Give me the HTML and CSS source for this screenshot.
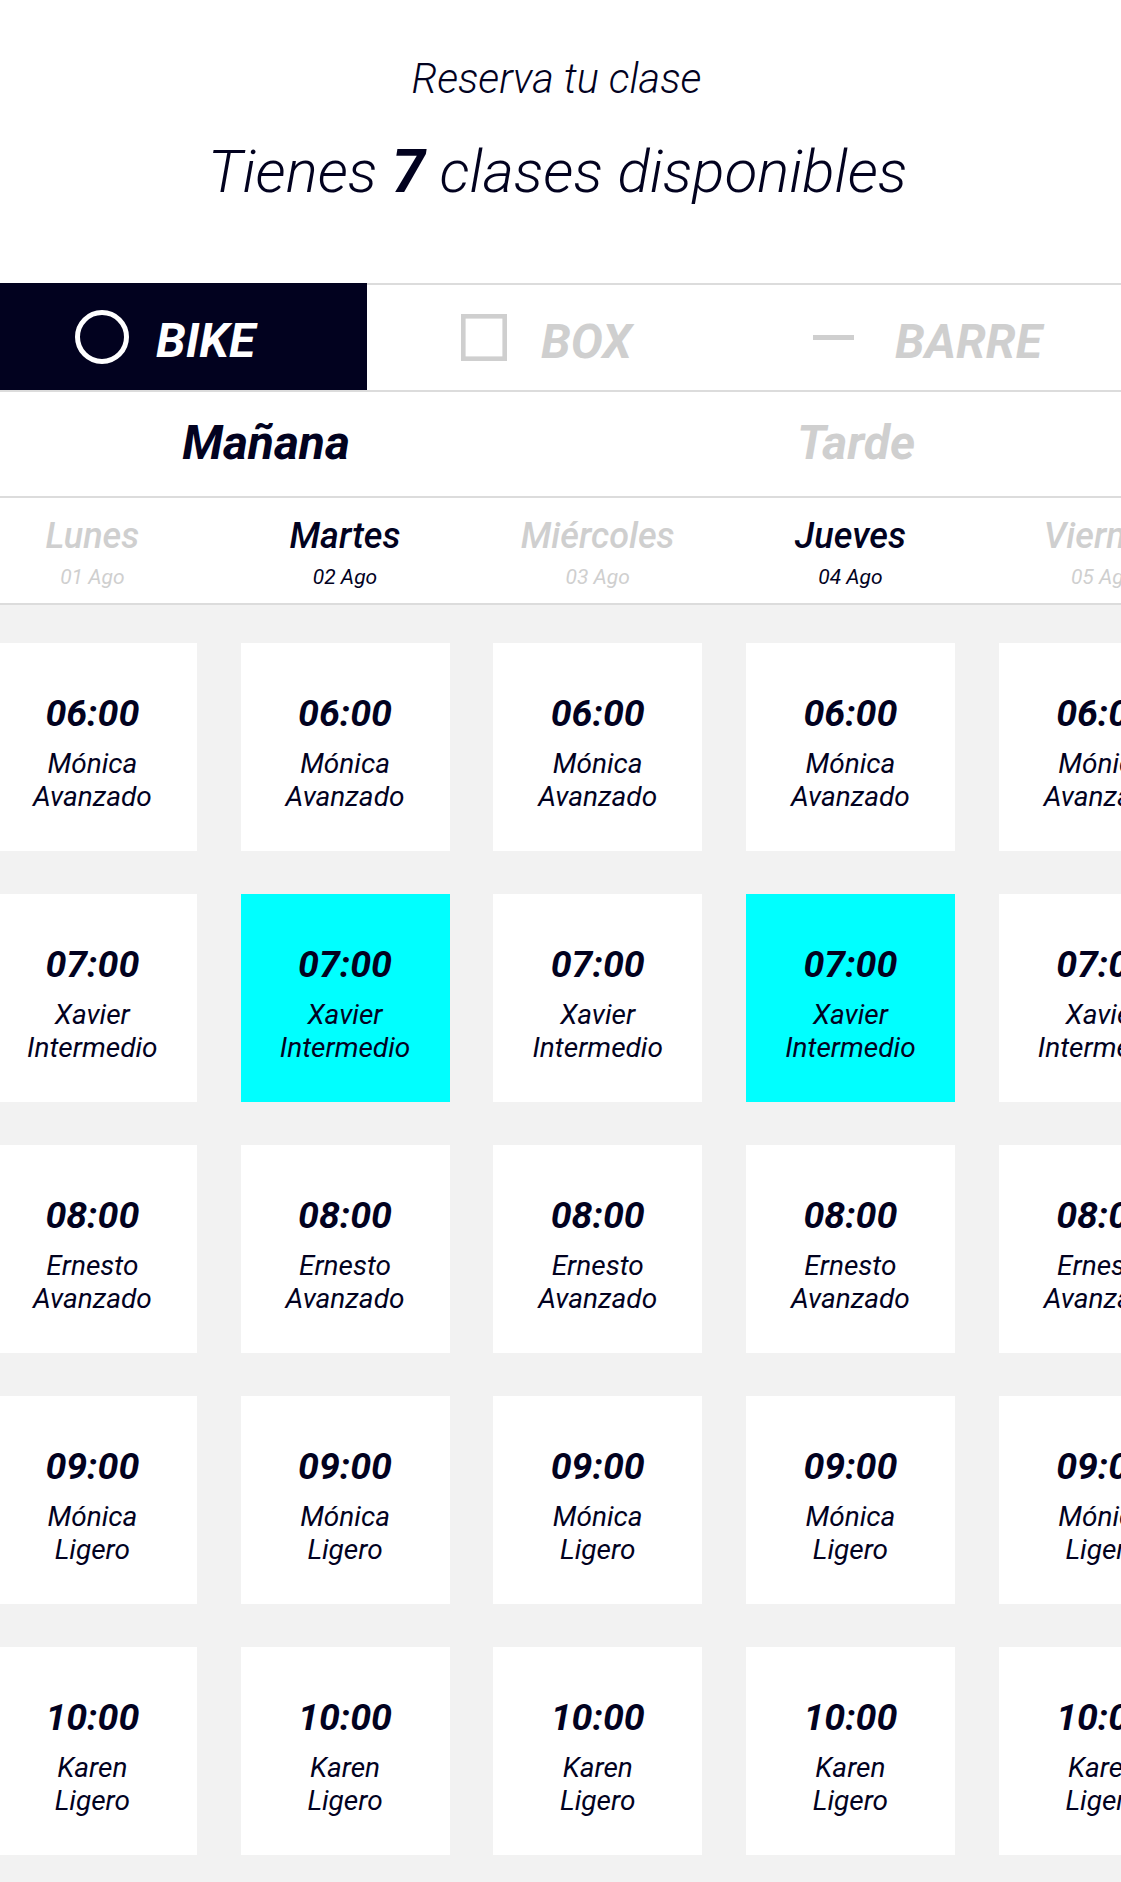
FILE: index.html
```html
<!DOCTYPE html>
<html lang="es">
<head>
<meta charset="utf-8">
<title>Reserva tu clase</title>
<link rel="stylesheet" href="styles.css">
</head>
<body>
<div class="page">
  <header class="hero">
    <p class="hero-sub">Reserva tu clase</p>
    <h1 class="hero-title">Tienes <strong>7</strong> clases disponibles</h1>
  </header>

  <nav class="tabs">
    <div class="tab tab-bike is-active">
      <span class="tab-icon">
        <svg width="54" height="54" viewBox="0 0 54 54"><circle cx="27" cy="27" r="24.5" fill="none" stroke="#fff" stroke-width="5"/></svg>
      </span>
      <span class="tab-label">BIKE</span>
    </div>
    <div class="tab tab-box">
      <span class="tab-icon">
        <svg width="46" height="47" viewBox="0 0 46 47"><rect x="2.3" y="2.3" width="41.4" height="42.4" fill="none" stroke="#cfcfcf" stroke-width="4.6"/></svg>
      </span>
      <span class="tab-label">BOX</span>
    </div>
    <div class="tab tab-barre">
      <span class="tab-icon">
        <svg width="41" height="6" viewBox="0 0 41 6"><rect x="0" y="0" width="41" height="5" fill="#cfcfcf"/></svg>
      </span>
      <span class="tab-label">BARRE</span>
    </div>
  </nav>

  <div class="periods">
    <div class="period is-active">Mañana</div>
    <div class="period">Tarde</div>
  </div>

  <div class="days">
    <div class="day"><span class="day-name">Lunes</span><span class="day-date">01 Ago</span></div>
    <div class="day is-active"><span class="day-name">Martes</span><span class="day-date">02 Ago</span></div>
    <div class="day"><span class="day-name">Miércoles</span><span class="day-date">03 Ago</span></div>
    <div class="day is-active"><span class="day-name">Jueves</span><span class="day-date">04 Ago</span></div>
    <div class="day"><span class="day-name">Viernes</span><span class="day-date">05 Ago</span></div>
  </div>

  <main class="schedule">
    <div class="slots">
      <div class="slot"><span class="slot-time">06:00</span><span class="slot-line">Mónica</span><span class="slot-line">Avanzado</span></div>
      <div class="slot"><span class="slot-time">06:00</span><span class="slot-line">Mónica</span><span class="slot-line">Avanzado</span></div>
      <div class="slot"><span class="slot-time">06:00</span><span class="slot-line">Mónica</span><span class="slot-line">Avanzado</span></div>
      <div class="slot"><span class="slot-time">06:00</span><span class="slot-line">Mónica</span><span class="slot-line">Avanzado</span></div>
      <div class="slot"><span class="slot-time">06:00</span><span class="slot-line">Mónica</span><span class="slot-line">Avanzado</span></div>

      <div class="slot"><span class="slot-time">07:00</span><span class="slot-line">Xavier</span><span class="slot-line">Intermedio</span></div>
      <div class="slot is-booked"><span class="slot-time">07:00</span><span class="slot-line">Xavier</span><span class="slot-line">Intermedio</span></div>
      <div class="slot"><span class="slot-time">07:00</span><span class="slot-line">Xavier</span><span class="slot-line">Intermedio</span></div>
      <div class="slot is-booked"><span class="slot-time">07:00</span><span class="slot-line">Xavier</span><span class="slot-line">Intermedio</span></div>
      <div class="slot"><span class="slot-time">07:00</span><span class="slot-line">Xavier</span><span class="slot-line">Intermedio</span></div>

      <div class="slot"><span class="slot-time">08:00</span><span class="slot-line">Ernesto</span><span class="slot-line">Avanzado</span></div>
      <div class="slot"><span class="slot-time">08:00</span><span class="slot-line">Ernesto</span><span class="slot-line">Avanzado</span></div>
      <div class="slot"><span class="slot-time">08:00</span><span class="slot-line">Ernesto</span><span class="slot-line">Avanzado</span></div>
      <div class="slot"><span class="slot-time">08:00</span><span class="slot-line">Ernesto</span><span class="slot-line">Avanzado</span></div>
      <div class="slot"><span class="slot-time">08:00</span><span class="slot-line">Ernesto</span><span class="slot-line">Avanzado</span></div>

      <div class="slot"><span class="slot-time">09:00</span><span class="slot-line">Mónica</span><span class="slot-line">Ligero</span></div>
      <div class="slot"><span class="slot-time">09:00</span><span class="slot-line">Mónica</span><span class="slot-line">Ligero</span></div>
      <div class="slot"><span class="slot-time">09:00</span><span class="slot-line">Mónica</span><span class="slot-line">Ligero</span></div>
      <div class="slot"><span class="slot-time">09:00</span><span class="slot-line">Mónica</span><span class="slot-line">Ligero</span></div>
      <div class="slot"><span class="slot-time">09:00</span><span class="slot-line">Mónica</span><span class="slot-line">Ligero</span></div>

      <div class="slot"><span class="slot-time">10:00</span><span class="slot-line">Karen</span><span class="slot-line">Ligero</span></div>
      <div class="slot"><span class="slot-time">10:00</span><span class="slot-line">Karen</span><span class="slot-line">Ligero</span></div>
      <div class="slot"><span class="slot-time">10:00</span><span class="slot-line">Karen</span><span class="slot-line">Ligero</span></div>
      <div class="slot"><span class="slot-time">10:00</span><span class="slot-line">Karen</span><span class="slot-line">Ligero</span></div>
      <div class="slot"><span class="slot-time">10:00</span><span class="slot-line">Karen</span><span class="slot-line">Ligero</span></div>
    </div>
  </main>
</div>
</body>
</html>
```

FILE: styles.css
```css
html, body {
  margin: 0;
  padding: 0;
  background: #f2f2f2;
}

body {
  font-family: Roboto, "Noto Sans", sans-serif;
  color: #02021f;
}

.page {
  width: 1121px;
  min-height: 1882px;
  overflow: hidden;
  background: #f2f2f2;
}

/* Hero */
.hero {
  box-sizing: border-box;
  height: 283px;
  padding-top: 55px;
  background: #fff;
  text-align: center;
  font-style: italic;
}

.hero-sub {
  margin: 0;
  padding-right: 8px;
  font-size: 41.5px;
  line-height: 48px;
  font-weight: 300;
}

.hero-title {
  margin: 34px 0 0;
  padding-right: 6px;
  font-size: 60px;
  line-height: 70px;
  font-weight: 300;
}

.hero-title strong {
  font-weight: 700;
}

/* Tabs */
.tabs {
  display: flex;
  height: 105px;
  background: #fff;
  border-top: 2px solid #dcdcdc;
  border-bottom: 2px solid #dcdcdc;
}

.tab {
  box-sizing: border-box;
  display: flex;
  align-items: center;
  gap: 30px;
  font-size: 48px;
  font-weight: 700;
  font-style: italic;
  color: #cfcfcf;
}

.tab-label {
  padding-top: 7px;
}

.tab-icon {
  width: 54px;
  display: flex;
  justify-content: center;
  align-items: center;
}

.tab-icon svg {
  display: block;
}

.tab-bike {
  width: 367px;
  padding-left: 75px;
  gap: 27px;
}

.tab.is-active {
  background: #02021f;
  color: #fff;
  margin-top: -2px;
  height: 107px;
}

.tab-box {
  width: 367px;
  padding-left: 90px;
}

.tab-barre {
  flex: 1;
  padding-left: 72px;
  gap: 35px;
}

/* Periods */
.periods {
  display: flex;
  width: 1180px;
  margin-left: -29px;
  height: 104px;
  background: #fff;
  border-bottom: 2px solid #dcdcdc;
}

.period {
  width: 590px;
  display: flex;
  align-items: center;
  justify-content: center;
  padding-bottom: 3px;
  box-sizing: border-box;
  font-size: 48px;
  font-weight: 700;
  font-style: italic;
  color: #cfcfcf;
}

.period.is-active {
  color: #02021f;
}

/* Days */
.days {
  display: grid;
  grid-template-columns: repeat(5, 252.7px);
  box-sizing: border-box;
  height: 107px;
  padding: 17px 0 15px;
  background: #fff;
  border-bottom: 2px solid #dcdcdc;
  margin-left: -34px;
  width: 1155px;
  overflow: hidden;
}

.day {
  display: flex;
  flex-direction: column;
  align-items: center;
  font-style: italic;
  color: #cfcfcf;
}

.day.is-active {
  color: #02021f;
}

.day-name {
  font-size: 36px;
  line-height: 42px;
  font-weight: 500;
  white-space: nowrap;
}

.day-date {
  margin-top: 8px;
  font-size: 21px;
  line-height: 24px;
  font-weight: 400;
  white-space: nowrap;
}

/* Schedule */
.schedule {
  padding-top: 38px;
  margin-left: -34px;
  width: 1155px;
  overflow: hidden;
}

.slots {
  display: grid;
  grid-template-columns: repeat(5, 252.7px);
  row-gap: 43px;
}

.slot {
  box-sizing: border-box;
  justify-self: center;
  width: 209px;
  height: 208px;
  padding-top: 48px;
  background: #fff;
  display: flex;
  flex-direction: column;
  align-items: center;
  font-style: italic;
  color: #02021f;
}

.slot.is-booked {
  background: #00ffff;
}

.slot-time {
  font-size: 37.5px;
  line-height: 44px;
  font-weight: 700;
  margin-bottom: 12px;
}

.slot-line {
  font-size: 28px;
  line-height: 33px;
  font-weight: 400;
  white-space: nowrap;
}
```
